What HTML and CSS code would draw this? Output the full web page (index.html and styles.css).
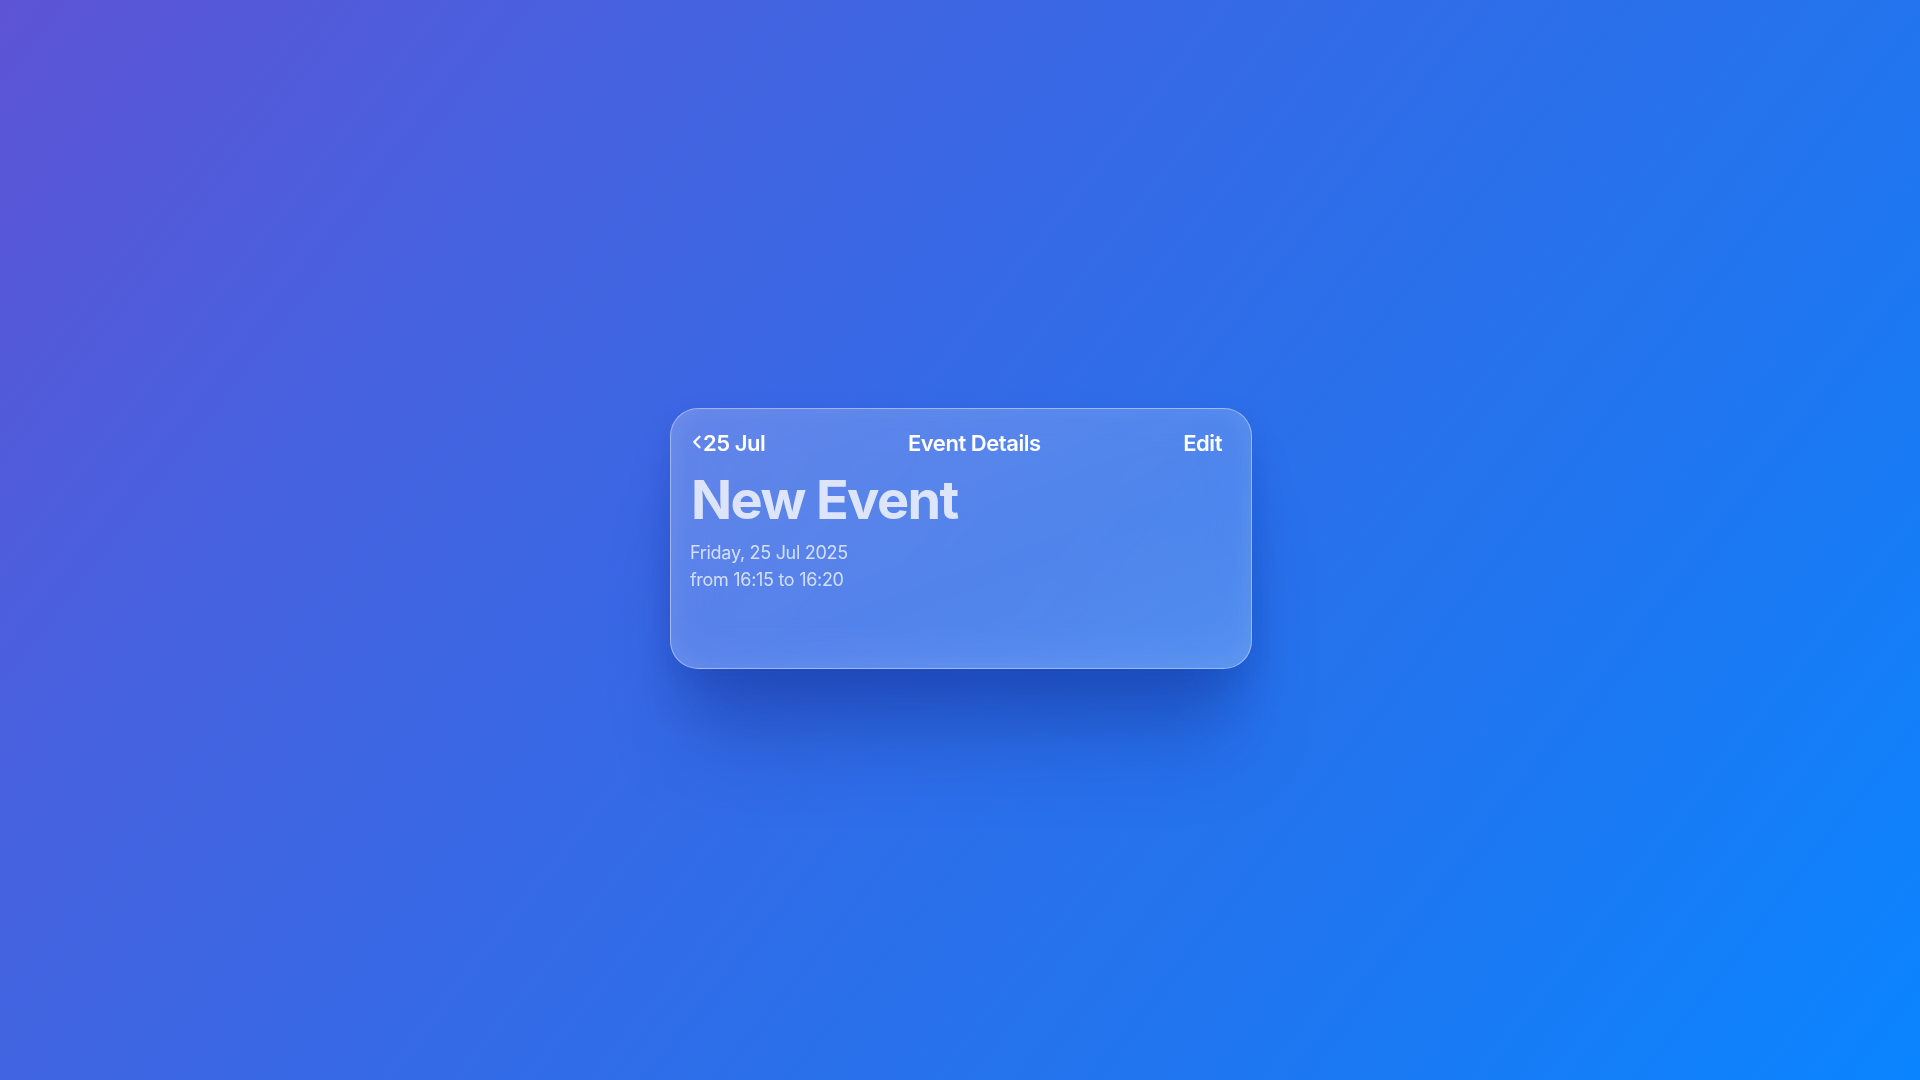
FILE: index.html
```html
<!DOCTYPE html>
<html lang="en">
<head>
<meta charset="utf-8">
<title>Event Details</title>
<link rel="stylesheet" href="styles.css">
</head>
<body>
<main class="stage">
  <section class="card">
    <header class="nav">
      <a class="nav-back" href="#">
        <svg class="chevron" viewBox="0 0 10 14" width="10" height="14" aria-hidden="true">
          <polyline points="7.5,1.8 2.2,7 7.5,12.2" fill="none" stroke="#ffffff" stroke-width="2.3" stroke-linecap="round" stroke-linejoin="round"/>
        </svg>
        <span>25 Jul</span>
      </a>
      <h2 class="nav-title">Event Details</h2>
      <a class="nav-edit" href="#">Edit</a>
    </header>
    <h1 class="event-title">New Event</h1>
    <p class="event-meta">Friday, 25 Jul 2025<br>from 16:15 to 16:20</p>
  </section>
</main>
</body>
</html>
```

FILE: styles.css
```css
* { box-sizing: border-box; }

html, body {
  margin: 0;
  padding: 0;
  height: 100%;
}

body {
  font-family: Inter, "Noto Sans", "Liberation Sans", sans-serif;
  background: linear-gradient(128deg, #5d54d5 0%, #4662e0 24%, #336be7 48%, #2274ee 70%, #0a85ff 100%);
  color: #ffffff;
  -webkit-font-smoothing: antialiased;
}

.stage {
  min-height: 100vh;
  display: flex;
  align-items: center;
  justify-content: center;
  padding-left: 2px;
  padding-bottom: 3px;
}

.card {
  width: 582px;
  height: 261px;
  border-radius: 28px;
  padding: 20px 29px 0 19px;
  background: linear-gradient(160deg, rgba(255,255,255,0.2) 0%, rgba(255,255,255,0.16) 60%, rgba(255,255,255,0.2) 100%);
  border: 1px solid rgba(255,255,255,0.42);
  box-shadow:
    0 95px 80px -25px rgba(20, 50, 150, 0.38),
    0 40px 50px -10px rgba(20, 50, 150, 0.25),
    0 10px 30px rgba(20, 50, 150, 0.12),
    inset 0 -20px 40px rgba(255,255,255,0.05),
    inset 0 0 24px rgba(255,255,255,0.06);
  backdrop-filter: blur(20px);
}

.nav {
  display: flex;
  justify-content: space-between;
  align-items: center;
  height: 28px;
}

.nav-back,
.nav-title,
.nav-edit {
  margin: 0;
  color: #ffffff;
  text-decoration: none;
  font-size: 22px;
  line-height: 28px;
  font-weight: 600;
  letter-spacing: -0.45px;
}

.nav-back {
  display: flex;
  align-items: center;
  gap: 1px;
  padding-left: 2px;
}

.chevron {
  display: block;
  margin-top: -2px;
}

.event-title {
  margin: 13px 0 0 1px;
  font-size: 54px;
  line-height: 60px;
  font-weight: 700;
  letter-spacing: -1.6px;
  color: rgba(236, 240, 252, 0.9);
}

.event-meta {
  margin: 9px 0 0 0;
  font-size: 18px;
  line-height: 27px;
  font-weight: 400;
  letter-spacing: -0.3px;
  color: rgba(255, 255, 255, 0.74);
}
```
